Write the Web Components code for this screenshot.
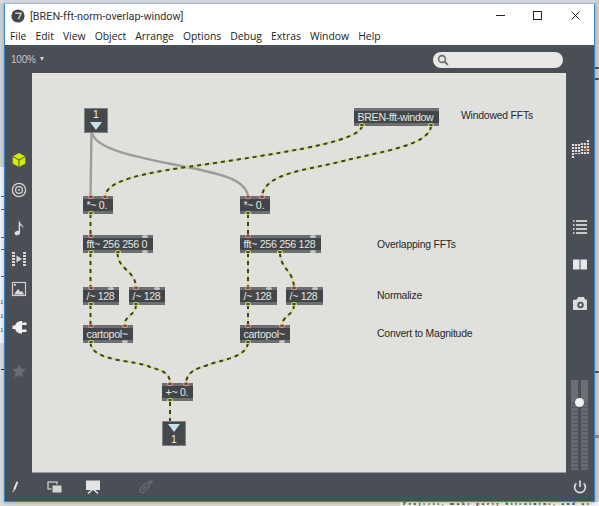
<!DOCTYPE html>
<html>
<head>
<meta charset="utf-8">
<title>BREN-fft-norm-overlap-window</title>
<style>
html, body { margin: 0; padding: 0; width: 599px; height: 506px; overflow: hidden; background: #dcdcd8; }
</style>
</head>
<body>
<page-backdrop></page-backdrop>
<max-window heading="[BREN-fft-norm-overlap-window]">
  <menu-item slot="menu">File</menu-item>
  <menu-item slot="menu">Edit</menu-item>
  <menu-item slot="menu">View</menu-item>
  <menu-item slot="menu">Object</menu-item>
  <menu-item slot="menu">Arrange</menu-item>
  <menu-item slot="menu">Options</menu-item>
  <menu-item slot="menu">Debug</menu-item>
  <menu-item slot="menu">Extras</menu-item>
  <menu-item slot="menu">Window</menu-item>
  <menu-item slot="menu">Help</menu-item>

  <tool-icon slot="left" name="cube" style="margin-top:79px"></tool-icon>
  <tool-icon slot="left" name="target" style="margin-top:14px"></tool-icon>
  <tool-icon slot="left" name="note" style="margin-top:22px"></tool-icon>
  <tool-icon slot="left" name="video" style="margin-top:15px"></tool-icon>
  <tool-icon slot="left" name="image" style="margin-top:14px"></tool-icon>
  <tool-icon slot="left" name="plug" style="margin-top:22px"></tool-icon>
  <tool-icon slot="left" name="star" style="margin-top:28px"></tool-icon>

  <patch-canvas>
    <patch-toggle x="84" y="108" num="1"></patch-toggle>
    <patch-box x="354" y="108" w="85" out="8,77">BREN-fft-window</patch-box>
    <patch-comment x="461" y="108">Windowed FFTs</patch-comment>
    <patch-box x="83" y="196" w="30" in="7.5,22" out="7.5">*~ 0.</patch-box>
    <patch-box x="240" y="196" w="30" in="8,22" out="8">*~ 0.</patch-box>
    <patch-box x="83" y="235" w="70" in="7.5" idle-in="62" out="7.5,34.5" idle-out="62">fft~ 256 256 0</patch-box>
    <patch-box x="240" y="235" w="81" in="8" idle-in="73" out="8,40" idle-out="73">fft~ 256 256 128</patch-box>
    <patch-comment x="377" y="237">Overlapping FFTs</patch-comment>
    <patch-box x="83" y="287" w="36" in="7.5" idle-in="28" out="7.5">/~ 128</patch-box>
    <patch-box x="129" y="287" w="36" in="7" idle-in="28" out="7">/~ 128</patch-box>
    <patch-box x="240" y="287" w="37" in="8" idle-in="29" out="8">/~ 128</patch-box>
    <patch-box x="286" y="287" w="37" in="8" idle-in="29" out="8">/~ 128</patch-box>
    <patch-comment x="377" y="288">Normalize</patch-comment>
    <patch-box x="83" y="325" w="50" in="7.5,41.5" out="7.5" idle-out="42">cartopol~</patch-box>
    <patch-box x="240" y="325" w="50" in="8,42" out="8" idle-out="42">cartopol~</patch-box>
    <patch-comment x="377" y="326">Convert to Magnitude</patch-comment>
    <patch-box x="162" y="383" w="31" in="8,24" out="8">+~ 0.</patch-box>
    <patch-toggle x="162" y="421" num="1" down></patch-toggle>
  </patch-canvas>

  <tool-icon slot="right" name="grid" size="20" style="margin-top:66px"></tool-icon>
  <tool-icon slot="right" name="list" size="20" style="margin-top:58px"></tool-icon>
  <tool-icon slot="right" name="book" size="20" style="margin-top:18px"></tool-icon>
  <tool-icon slot="right" name="camera" size="20" style="margin-top:18px"></tool-icon>
  <level-meter slot="right" style="margin-top:67px"></level-meter>

  <tool-icon slot="bottom" name="pencil" style="margin-left:1px"></tool-icon>
  <tool-icon slot="bottom" name="windows" style="margin-left:25px"></tool-icon>
  <tool-icon slot="bottom" name="screen" style="margin-left:22px"></tool-icon>
  <tool-icon slot="bottom" name="clip" style="margin-left:37px"></tool-icon>
  <tool-icon slot="bottom" name="power" style="margin-left:418px"></tool-icon>
</max-window>

<script>
const backdropTemplate = document.createElement('template');
backdropTemplate.innerHTML = `
<style>
:host { position: absolute; left: 0; top: 0; width: 599px; height: 506px; overflow: hidden; font: 11px "Liberation Serif", serif; color: #222; }
div { position: absolute; }
#top { left: 0; top: 0; width: 599px; height: 4px; background: #d6dade; }
#page { left: 0; top: 167px; width: 4px; height: 176px; background: #f2f5fa; }
#edge { left: 0; top: 4px; width: 4px; height: 163px; background: #cfd2d4; }
#right { left: 595px; top: 0; width: 4px; height: 506px; background: #cdcdc8; }
#bottom { left: 400px; top: 502px; width: 199px; height: 4px; background: #f4f4f2; }
#bottom span { position: absolute; left: 3px; top: 0; font: bold 5px/4px "Liberation Serif", serif; letter-spacing: 2.700px; white-space: nowrap; color: #16223c; }
.tick { width: 3px; height: 1px; background: #666; left: 1px; }
.num { left: 0; font-size: 7px; line-height: 8px; }
.mark { left: 595px; width: 4px; height: 2px; background: #555; }
</style>
<div id="top"></div><div id="edge"></div><div id="page"></div><div id="right"></div>
<div id="bottom"><span>Projects, make party bitcoinine, and as</span></div>
<div class="tick" style="top:196px"></div><div class="tick" style="top:209px"></div>
<div class="tick" style="top:237px"></div><div class="tick" style="top:249px"></div>
<div class="tick" style="top:276px"></div>
<div class="num" style="top:298px">1</div><div class="num" style="top:312px">1</div><div class="num" style="top:326px">1</div>
<div class="tick" style="top:369px;background:#222"></div>
<div class="mark" style="top:67px"></div><div class="mark" style="top:78px"></div>
<div class="mark" style="top:371px"></div>
<div class="num" style="left:595px;top:432px">st</div>
`;

class PageBackdrop extends HTMLElement {
  connectedCallback() {
    this.attachShadow({ mode: 'open' });
    this.shadowRoot.appendChild(backdropTemplate.content.cloneNode(true));
  }
}

const windowTemplate = document.createElement('template');
windowTemplate.innerHTML = `
<style>
:host { position: absolute; left: 4px; top: 3px; display: flex; flex-direction: column; width: 591px; height: 499px; box-sizing: border-box; border: 1px solid #3b83c8; border-top-color: #9fc0de; background: #4a4e55; box-shadow: 0 1px 4px rgba(0,0,0,0.25); }
#title { display: flex; align-items: center; height: 24px; padding-bottom: 2px; flex: none; background: #fff; padding-left: 6px; color: #333; }
#title svg { display: block; }
#name { margin-left: 5px; font: 10.800px Roboto, sans-serif; }
#controls { margin-left: auto; margin-right: -1px; display: flex; }
#controls svg { width: 38px; height: 24px; }
#menu { display: flex; flex: none; height: 15px; background: #fff; padding-left: 5px; gap: 9px; align-items: flex-start; }
#tools { display: flex; align-items: center; height: 28px; flex: none; padding-left: 6px; font: 10px "Liberation Sans", sans-serif; letter-spacing: -0.200px; color: #c6c8ca; }
#tools i { width: 0; height: 0; border: 2.500px solid transparent; border-top: 4px solid #d0d2d4; border-bottom: 0; margin-left: 4px; }
#search { margin-left: auto; margin-right: 31px; margin-top: 1px; width: 130px; height: 16px; border-radius: 8px; background: #e8e8e8; display: flex; align-items: center; padding-left: 4px; box-sizing: border-box; }
#middle { display: flex; flex: 1; min-height: 0; }
#left { width: 27px; flex: none; display: flex; flex-direction: column; align-items: center; }
#right { width: 28px; flex: none; display: flex; flex-direction: column; align-items: center; }
#bottom { display: flex; align-items: center; flex: none; height: 28px; }
</style>
<div id="title">
  <svg width="14" height="14" viewBox="0 0 14 14"><circle cx="7" cy="7" r="6.600" fill="#44474c"/><path d="M4.200 4.300H10L7.400 10.200" fill="none" stroke="#c9cbcd" stroke-width="1.500"/></svg>
  <span id="name"></span>
  <div id="controls">
    <svg viewBox="0 0 38 24"><path d="M15 11.500h9" stroke="#222" stroke-width="1"/></svg>
    <svg viewBox="0 0 38 24"><rect x="14.500" y="7.500" width="8" height="8" fill="none" stroke="#222"/></svg>
    <svg viewBox="0 0 38 24"><path d="M14.500 7.500l8 8M22.500 7.500l-8 8" stroke="#222" fill="none"/></svg>
  </div>
</div>
<div id="menu"><slot name="menu"></slot></div>
<div id="tools">
  100%<i></i>
  <div id="search"><svg width="12" height="12" viewBox="0 0 12 12"><circle cx="5" cy="5" r="3.400" fill="none" stroke="#6d6f72" stroke-width="1.600"/><path d="M7.500 7.500l3.400 3.400" stroke="#6d6f72" stroke-width="2"/></svg></div>
</div>
<div id="middle">
  <div id="left"><slot name="left"></slot></div>
  <slot></slot>
  <div id="right"><slot name="right"></slot></div>
</div>
<div id="bottom"><slot name="bottom"></slot></div>
`;

class MaxWindow extends HTMLElement {
  connectedCallback() {
    this.attachShadow({ mode: 'open' });
    this.shadowRoot.appendChild(windowTemplate.content.cloneNode(true));
    this.shadowRoot.querySelector('#name').textContent = this.getAttribute('heading');
  }
}

class MenuItem extends HTMLElement {
  connectedCallback() {
    this.attachShadow({ mode: 'open' });
    this.shadowRoot.innerHTML = `
<style>:host { display: block; font: 10.400px/12px "Open Sans", sans-serif; color: #222; }</style><slot></slot>`;
  }
}

// Icon drawings, all on a 16x16 or 20x20 box
const ICONS = {
  cube: '<path d="M8 1l6.300 3.500v7L8 15l-6.300-3.500v-7z" fill="#d5ee00"/><path d="M1.700 4.500L8 8l6.300-3.500M8 8v7" fill="none" stroke="#4a4e55" stroke-width="1"/>',
  target: '<circle cx="8" cy="8" r="6.600" fill="none" stroke="#d4d4d4" stroke-width="1.300"/><circle cx="8" cy="8" r="3.400" fill="none" stroke="#d4d4d4" stroke-width="1.300"/><circle cx="8" cy="8" r="1" fill="#d4d4d4"/>',
  note: '<ellipse cx="6.300" cy="13" rx="2.800" ry="2.200" fill="#dcdcdc" transform="rotate(-20 6.300 13)"/><path d="M8.400 13V1.500" stroke="#dcdcdc" stroke-width="1.400"/><path d="M8.400 1.500c.5 2.500 4.500 3.500 4 7-.7-2.200-2.500-3-4-3.400z" fill="#dcdcdc"/>',
  video: '<path d="M2.500 1v14M13.500 1v14" stroke="#d8d8d8" stroke-width="3" stroke-dasharray="2 1"/><path d="M5.500 4.500L11 8l-5.500 3.500z" fill="#d8d8d8"/>',
  image: '<rect x="1.500" y="1.500" width="13" height="13" fill="none" stroke="#cfcfcf" stroke-width="1.200"/><path d="M3 13.500l4-5.500 2.500 3 1.500-1 2 3.500z" fill="#dcdcdc"/><rect x="3" y="3" width="1.800" height="1.800" fill="#dcdcdc"/>',
  plug: '<rect x="1.500" y="6.500" width="3.500" height="3.500" fill="#f2f2f2"/><path d="M4 8.200C4 4 7 2 11 2v12.500C7 14.500 4 12.500 4 8.200z" fill="#f2f2f2"/><rect x="11" y="3.500" width="4.500" height="2.500" fill="#f2f2f2"/><rect x="11" y="10.500" width="4.500" height="2.500" fill="#f2f2f2"/>',
  star: '<path d="M8 1l2.100 4.700 5 .5-3.800 3.300 1.100 5L8 11.900l-4.400 2.600 1.100-5L.9 6.200l5-.5z" fill="#686c72"/>',
  pencil: '<path d="M10.500 2.500l1.800.6-3.100 7.800-2-.7z" fill="#e4e4e4"/><path d="M7 11l1.800.6-2.200 2z" fill="#e4e4e4"/>',
  windows: '<rect x="1" y="3" width="9" height="7" fill="#4a4e55" stroke="#d4d4d4" stroke-width="1.200"/><rect x="5" y="6" width="10" height="8" fill="#d4d4d4" stroke="#4a4e55" stroke-width="1"/>',
  screen: '<rect x="1" y="1.500" width="14" height="9.500" fill="#e4e4e4"/><path d="M8 10l-5 4.500M8 10l5 4.500" stroke="#e4e4e4" stroke-width="1.600"/>',
  clip: '<g transform="rotate(45 6.500 9)" fill="none" stroke="#6c7076" stroke-width="1.200"><rect x="4" y="3.500" width="5" height="11" rx="2.500"/><path d="M6.500 6v6"/></g><path d="M12.500 .5v5M10 3h5" stroke="#6c7076" stroke-width="1.300"/>',
  power: '<path d="M4.300 4.300a5.400 5.400 0 1 0 7.400 0" fill="none" stroke="#dcdcdc" stroke-width="1.700"/><path d="M8 1.500v6.500" stroke="#dcdcdc" stroke-width="1.700"/>',
  grid: '<path d="M3 5v15M6 5v10M9 5v10M12 4v11M15 4v11M18 1v14" stroke="#dedede" stroke-width="2.200" stroke-dasharray="2 1" fill="none"/><rect x="14" y="9" width="3" height="2.500" fill="#d0641e"/>',
  list: '<path d="M3 4h1.500M6 4h11M3 8h1.500M6 8h11M3 12h1.500M6 12h11M3 16h1.500M6 16h11" stroke="#c8c8c8" stroke-width="2" fill="none"/>',
  book: '<path d="M3 4.500h6.500v10H3zM10.500 4.500H17v10h-6.500z" fill="#e8e8e8"/>',
  camera: '<path d="M3 7l4-.5 1-2.500h6l1 2.500 2 .3V17H3z" fill="#dcdcdc"/><circle cx="10.500" cy="12" r="3.200" fill="#4a4e55"/><circle cx="10.500" cy="12" r="1.400" fill="#dcdcdc"/>'
};

class ToolIcon extends HTMLElement {
  connectedCallback() {
    const size = this.getAttribute('size') || 16;
    this.attachShadow({ mode: 'open' });
    this.shadowRoot.innerHTML = `
<style>:host { display: block; flex: none; width: ${size}px; height: ${size}px; } svg { display: block; }</style>
<svg width="${size}" height="${size}" viewBox="0 0 ${size} ${size}">${ICONS[this.getAttribute('name')]}</svg>`;
  }
}

class LevelMeter extends HTMLElement {
  connectedCallback() {
    this.attachShadow({ mode: 'open' });
    this.shadowRoot.innerHTML = `
<style>
:host { display: block; flex: none; width: 18px; height: 90px; position: relative; }
#bars { display: flex; gap: 3px; height: 100%; }
.bar { width: 7px; background: linear-gradient(#6b6e73 0 24%, transparent 24%), repeating-linear-gradient(#66696e 0 3px, #54575d 3px 4px); }
#knob { position: absolute; left: 4px; top: 18px; width: 9px; height: 9px; border-radius: 50%; background: #f2f2f2; }
</style>
<div id="bars"><div class="bar"></div><div class="bar"></div></div>
<div id="knob"></div>`;
  }
}

const canvasTemplate = document.createElement('template');
canvasTemplate.innerHTML = `
<style>
:host { display: block; position: relative; flex: 1; background: #e0e1dc; border-bottom: 1px solid #9a9b98; box-sizing: border-box; overflow: hidden; }
svg { position: absolute; left: 0; top: 0; }
.dash { fill: none; stroke: #d2e27a; stroke-width: 2; }
.over { fill: none; stroke: #3c3e36; stroke-width: 2; stroke-dasharray: 4 4; }
.gray { fill: none; stroke: #9c9c9a; stroke-width: 2.400; }
</style>
<svg id="cables" width="534" height="400" viewBox="32 73 534 400"></svg>
<slot></slot>
`;

// Cables in page coordinates; the viewBox offsets them to the canvas
const SIGNAL_CABLES = [
  'M362 126C360 140 300 150 235 160C170 170 108 175 105 196',
  'M431 126C430 145 380 152 347 160C310 170 265 172 262 196',
  'M90.500 214V235', 'M248 214V235',
  'M90.500 253V287', 'M117.500 253C118 270 135 270 136 287',
  'M248 253V287', 'M280 253C281 270 293 270 294 287',
  'M90.500 305V325', 'M136 305C136 315 125 315 124.500 325',
  'M248 305V325', 'M294 305C294 315 283 315 282 325',
  'M90.500 343C92 362 137 360 150 367C160 370 170 372 170 383',
  'M248 343C246 358 220 360 208 365C195 369 187 372 186 383',
  'M170 402V421'
];

class PatchCanvas extends HTMLElement {
  connectedCallback() {
    this.attachShadow({ mode: 'open' });
    this.shadowRoot.appendChild(canvasTemplate.content.cloneNode(true));
    let cables = '<path class="gray" d="M91.500 133L90.500 196"/><path class="gray" d="M92 133C96 150 140 158 187 167C215 173 245 178 248 196"/>';
    SIGNAL_CABLES.forEach((d) => {
      cables += `<path class="dash" d="${d}"/><path class="over" d="${d}"/>`;
    });
    this.shadowRoot.querySelector('#cables').innerHTML = cables;
  }
}

// Nodes on the patch are placed by their page position
function placeNode(el) {
  el.style.left = `${el.getAttribute('x') - 32}px`;
  el.style.top = `${el.getAttribute('y') - 73}px`;
}

function ports(list, cls) {
  if (!list) return '';
  return list.split(',').map((x) => `<b class="${cls}" style="left:${parseFloat(x) - 3}px"></b>`).join('');
}

class PatchBox extends HTMLElement {
  connectedCallback() {
    placeNode(this);
    this.attachShadow({ mode: 'open' });
    this.shadowRoot.innerHTML = `
<style>
:host { position: absolute; display: block; width: ${this.getAttribute('w')}px; height: 18px; background: linear-gradient(#6c6f71 0 3px, #424648 3px 15px, #6c6f71 15px); }
span { position: absolute; left: 3.500px; top: 3px; font: 10.600px/12px "Liberation Sans", sans-serif; letter-spacing: -0.300px; color: #e4e6e4; white-space: nowrap; }
b { position: absolute; width: 6px; height: 4px; box-sizing: border-box; border-radius: 50%; }
.in { top: -1px; background: #4a4a46; border: 1px solid #ea9488; }
.out { bottom: -1px; background: #3a3c30; border: 1px solid #cfe06a; }
.idle-in { top: 0; height: 3px; background: #c4c6c4; }
.idle-out { bottom: 0; height: 3px; background: #c4c6c4; }
</style>
<span><slot></slot></span>
${ports(this.getAttribute('in'), 'in')}${ports(this.getAttribute('idle-in'), 'idle-in')}${ports(this.getAttribute('out'), 'out')}${ports(this.getAttribute('idle-out'), 'idle-out')}`;
  }
}

class PatchToggle extends HTMLElement {
  connectedCallback() {
    placeNode(this);
    const down = this.hasAttribute('down');
    this.attachShadow({ mode: 'open' });
    this.shadowRoot.innerHTML = `
<style>
:host { position: absolute; display: flex; flex-direction: ${down ? 'column' : 'column-reverse'}; align-items: center; justify-content: ${down ? 'flex-start' : 'flex-end'}; width: 24px; height: 25px; background: #45494b; border: 1px solid #7f8282; box-sizing: border-box; }
svg { display: block; flex: none; margin: 2px 0; }
span { font: 10.500px/11px "Liberation Sans", sans-serif; color: #eef0ee; }
</style>
<svg width="12" height="8" viewBox="0 0 12 8"><path d="M0 0h12L6 8z" fill="#c6e4ee"/></svg>
<span>${this.getAttribute('num')}</span>`;
  }
}

class PatchComment extends HTMLElement {
  connectedCallback() {
    placeNode(this);
    this.attachShadow({ mode: 'open' });
    this.shadowRoot.innerHTML = `
<style>:host { position: absolute; display: block; font: 10.400px/15px "Liberation Sans", sans-serif; letter-spacing: -0.200px; color: #262626; white-space: nowrap; }</style><slot></slot>`;
  }
}

customElements.define('page-backdrop', PageBackdrop);
customElements.define('max-window', MaxWindow);
customElements.define('menu-item', MenuItem);
customElements.define('tool-icon', ToolIcon);
customElements.define('level-meter', LevelMeter);
customElements.define('patch-canvas', PatchCanvas);
customElements.define('patch-box', PatchBox);
customElements.define('patch-toggle', PatchToggle);
customElements.define('patch-comment', PatchComment);
</script>
</body>
</html>
